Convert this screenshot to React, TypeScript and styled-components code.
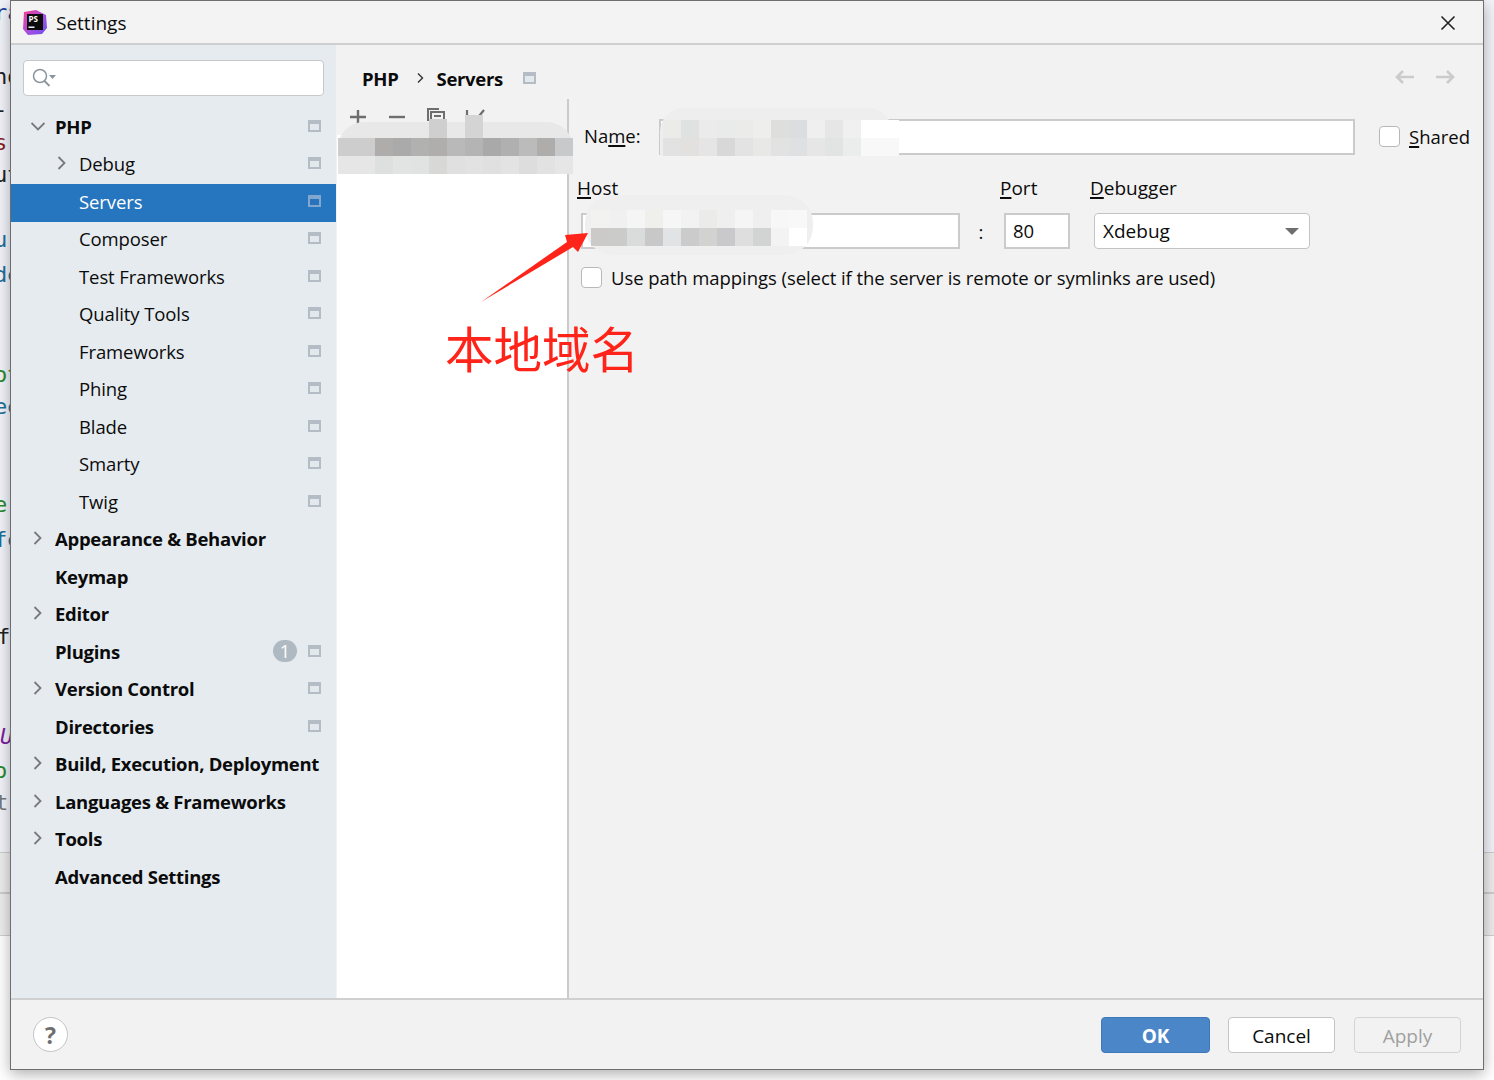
import React from "react";
import styled, { createGlobalStyle } from "styled-components";

const Global = createGlobalStyle`
  html, body { margin: 0; padding: 0; background: #fff; overflow: hidden; }
  #root { width: 1494px; height: 1080px; }
  * { box-sizing: border-box; }
`;
const Page = styled.div`
  position: relative; width: 1494px; height: 1080px; overflow: hidden;
  font-family: "Open Sans", "Noto Sans", "Noto Sans CJK SC", sans-serif;
  font-size: 18.5px; color: #0b0b0b;
`;
const Backdrop = styled.div`display: flex; flex-direction: column; height: 100%;`;
const EditorArea = styled.div`
  position: relative; height: 852px; background: #f2f4fa;
  font-family: "DejaVu Sans Mono", monospace; font-size: 22px;
`;
const Band = styled.div<{ $h: number }>`
  height: ${(p) => p.$h}px; background: #ededed; border-top: ${(p) => (p.$h === 40 ? 1 : 2)}px solid #cdcdcd;
`;
const Rest = styled.div`flex: 1; background: #fff; border-top: 1px solid #cfcfcf;`;
const Frag = styled.span<{ $y: number; $x: number; $c: string; $i?: boolean }>`
  position: absolute; left: ${(p) => p.$x}px; top: ${(p) => p.$y - 14}px; line-height: 28px;
  color: ${(p) => p.$c}; font-style: ${(p) => (p.$i ? "italic" : "normal")};
`;
const Dialog = styled.div`
  position: absolute; left: 10px; top: 0; width: 1474px; height: 1070px;
  display: flex; flex-direction: column; background: #f2f2f2;
  border: 1px solid #6e6e6e; box-shadow: 0 4px 14px rgba(0,0,0,.32);
`;
const TitleBar = styled.div`
  height: 44px; flex: none; display: flex; align-items: center; padding: 0 27px 0 11px; gap: 9px;
  border-bottom: 2px solid #cfcfcf; background: #f3f3f3;
`;
const Title = styled.span`flex: 1; font-size: 19px; padding-top: 2px;`;
const CloseIcon = styled.svg`margin-top: 2px;`;
const Content = styled.div`flex: 1; display: flex; min-height: 0;`;
const Sidebar = styled.nav`width: 325px; flex: none; background: #e6ebf0; display: flex; flex-direction: column; padding-top: 15px;`;
const SearchBox = styled.div`
  height: 36px; margin: 0 12px 13px; background: #fff; border: 1.5px solid #c6c9cc; border-radius: 4px;
  display: flex; align-items: center; padding-left: 7px;
`;
const TreeRow = styled.div<{ $sel?: boolean; $level: number }>`
  height: 37.5px; flex: none; display: flex; align-items: center;
  padding: 0 15px 3px ${(p) => (p.$level === 0 ? 20 : 44)}px;
  background: ${(p) => (p.$sel ? "#2675bf" : "transparent")};
  color: ${(p) => (p.$sel ? "#fff" : "#0b0b0b")};
`;
const ChevronSlot = styled.span`width: 24px; height: 16px; flex: none; display: flex; align-items: center; margin-bottom: 1px;`;
const RowLabel = styled.span<{ $bold: boolean }>`
  flex: 1; font-weight: ${(p) => (p.$bold ? 700 : 400)}; white-space: nowrap;
  letter-spacing: ${(p) => (p.$bold ? "-0.28px" : "-0.1px")};
`;
const IconLift = styled.span`display: flex; margin-bottom: 1px;`;
const Badge = styled.span`
  width: 24px; height: 22px; border-radius: 11px; background: #afb9c1; color: #fff; font-size: 18px;
  display: flex; align-items: center; justify-content: center; margin-right: 11px;
`;
const Main = styled.main`flex: 1; display: flex; flex-direction: column; min-width: 0;`;
const Crumbs = styled.div`
  height: 54px; flex: none; display: flex; align-items: center; padding: 12px 28px 0 26px;
  font-weight: 700; letter-spacing: -0.3px;
`;
const CrumbSep = styled.span`margin: 0 12px 0 16px; display: flex;`;
const CrumbIcon = styled.span`margin-left: 20px; display: flex; flex: 1;`;
const NavArrows = styled.div`display: flex; gap: 20px; margin-bottom: 2px;`;
const Split = styled.div`flex: 1; display: flex; min-height: 0;`;
const ListCol = styled.div`width: 233px; flex: none; display: flex; flex-direction: column; border-right: 2px solid #cbcbcb;`;
const ListTools = styled.div`height: 36px; flex: none; display: flex; align-items: flex-start; gap: 19px; padding: 8px 0 0 12px; overflow: hidden;`;
const ListBody = styled.div`flex: 1; background: #fff; margin-left: 1px;`;
const Form = styled.div`flex: 1; padding: 20px 14px 0 8px; display: flex; flex-direction: column;`;
const NameRow = styled.div`display: flex; align-items: center; height: 35px; padding-left: 7px;`;
const NameLabel = styled.label`width: 75px; flex: none; padding-bottom: 2px;`;
const Field = styled.div<{ $w?: number }>`
  height: 36px; background: #fff; border: 2px solid #cbcbcb;
  ${(p) => (p.$w ? `width: ${p.$w}px; flex: none;` : "flex: 1;")}
  display: flex; align-items: center; padding: 0 0 2px 7px;
`;
const Check = styled.span`
  width: 21px; height: 21px; flex: none; background: #fff; border: 1.5px solid #b8b8b8; border-radius: 4px;
`;
const SharedWrap = styled.div`display: flex; align-items: center; gap: 9px; margin-left: 24px; width: 90px; white-space: nowrap; flex: none;`;
const HeadRow = styled.div`display: flex; height: 24px; margin-top: 22px; line-height: 24px; font-size: 19px;`;
const HeadCell = styled.span<{ $w: number }>`width: ${(p) => p.$w}px; flex: none;`;
const HostRow = styled.div`display: flex; align-items: center; margin-top: 13px; padding-left: 4px;`;
const Colon = styled.span`width: 44px; flex: none; text-align: center; padding-right: 2px;`;
const Select = styled.div`
  width: 216px; height: 36px; margin-left: 24px; flex: none; background: #fff; border: 1.5px solid #c4c4c4; border-radius: 4px;
  display: flex; align-items: center; justify-content: space-between; padding: 0 10px 0 8px; font-size: 19px;
`;
const Caret = styled.span`width: 0; height: 0; border-left: 7px solid transparent; border-right: 7px solid transparent; border-top: 7px solid #6e6e6e;`;
const PathRow = styled.div`display: flex; align-items: center; gap: 9px; margin-top: 16px; padding-left: 4px; white-space: nowrap; letter-spacing: -0.06px;`;
const Footer = styled.footer`
  height: 71px; flex: none; border-top: 2px solid #d0d0d0; background: #f2f2f2;
  display: flex; align-items: center; padding: 0 22px 0 22px;
`;
const Help = styled.span`
  width: 35px; height: 35px; border-radius: 50%; background: #fff; border: 1.5px solid #c4c4c4; color: #6e6e6e;
  font-weight: 700; font-size: 23px; display: flex; align-items: center; justify-content: center; margin-right: auto;
`;
const Btn = styled.button<{ $kind: "ok" | "normal" | "off" }>`
  width: ${(p) => (p.$kind === "ok" ? 109 : 107)}px; height: 36px;
  margin-left: ${(p) => (p.$kind === "off" ? 19 : 18)}px;
  border-radius: 4px; font: inherit; font-size: 19px; padding: 2px 0 0;
  font-weight: ${(p) => (p.$kind === "ok" ? 700 : 400)};
  background: ${(p) => (p.$kind === "ok" ? "#4b87c8" : p.$kind === "normal" ? "#fff" : "#f2f2f2")};
  color: ${(p) => (p.$kind === "ok" ? "#fff" : p.$kind === "normal" ? "#0b0b0b" : "#a0a0a0")};
  border: 1.5px solid ${(p) => (p.$kind === "ok" ? "#3f78b8" : p.$kind === "normal" ? "#c4c4c4" : "#d4d4d4")};
`;
/* annotations painted over the screenshot */
const Blob = styled.div<{ $x: number; $y: number; $w: number; $h: number; $r: string; $c: string }>`
  position: absolute; left: ${(p) => p.$x}px; top: ${(p) => p.$y}px; width: ${(p) => p.$w}px; height: ${(p) => p.$h}px;
  border-radius: ${(p) => p.$r}; background: ${(p) => p.$c};
`;
const Mosaic = styled.div<{ $x: number; $y: number; $cols: string }>`
  position: absolute; left: ${(p) => p.$x}px; top: ${(p) => p.$y}px; display: grid;
  grid-template-columns: ${(p) => p.$cols}; grid-auto-rows: 18px;
`;
const Cell = styled.i<{ $c: string }>`display: block; background: ${(p) => p.$c};`;
const ArrowLayer = styled.svg`position: absolute; left: 470px; top: 225px;`;
const Note = styled.div`
  position: absolute; left: 445px; top: 314px; color: #ff2419; font-size: 48.5px; line-height: 66px;
  font-family: "Noto Sans CJK SC", sans-serif; font-weight: 400; white-space: nowrap;
`;

const ScopeIcon = ({ sel }: { sel?: boolean }) => (
  <svg width="13" height="12" viewBox="0 0 13 12">
    <rect width="13" height="12" fill={sel ? "#7fa7d0" : "#b4bdc5"} />
    <rect x="2" y="4" width="9" height="6" fill={sel ? "#2a73ba" : "#e3e8ec"} />
  </svg>
);
const Chevron = ({ open }: { open?: boolean }) => (
  <svg width="14" height="14" viewBox="0 0 14 14" fill="none" stroke="#77797b" strokeWidth="1.800">
    {open ? <path d="M.5 4 7 10.500 13.500 4" /> : <path d="M3.500 1 9.500 7 3.500 13" />}
  </svg>
);
const U = styled.u`text-underline-offset: 2px; text-decoration-thickness: 1.5px;`;

type Row = { label: string; level: 0 | 1; chev?: "open" | "closed"; scope?: boolean; sel?: boolean; badge?: string };
const rows: Row[] = [
  { label: "PHP", level: 0, chev: "open", scope: true },
  { label: "Debug", level: 1, chev: "closed", scope: true },
  { label: "Servers", level: 1, scope: true, sel: true },
  { label: "Composer", level: 1, scope: true },
  { label: "Test Frameworks", level: 1, scope: true },
  { label: "Quality Tools", level: 1, scope: true },
  { label: "Frameworks", level: 1, scope: true },
  { label: "Phing", level: 1, scope: true },
  { label: "Blade", level: 1, scope: true },
  { label: "Smarty", level: 1, scope: true },
  { label: "Twig", level: 1, scope: true },
  { label: "Appearance & Behavior", level: 0, chev: "closed" },
  { label: "Keymap", level: 0 },
  { label: "Editor", level: 0, chev: "closed" },
  { label: "Plugins", level: 0, scope: true, badge: "1" },
  { label: "Version Control", level: 0, chev: "closed", scope: true },
  { label: "Directories", level: 0, scope: true },
  { label: "Build, Execution, Deployment", level: 0, chev: "closed" },
  { label: "Languages & Frameworks", level: 0, chev: "closed" },
  { label: "Tools", level: 0, chev: "closed" },
  { label: "Advanced Settings", level: 0 },
];
const frags: [number, number, string, string, boolean?][] = [
  [13, -6, "ra", "#1d3f9a"], [77, -6, "nd", "#222"], [110, -6, "-:", "#222"], [143, -6, "s'", "#8a1f1f"], [175, -6, "ut", "#222"],
  [240, -6, "u'", "#1f6f9a"], [275, -6, "de", "#1f6f9a"], [375, -6, "ot", "#2a8a2a"], [407, -6, "ee", "#1f6f9a"],
  [505, -6, "e-", "#2a8a2a"], [540, -6, "fe", "#1f6f9a"], [637, -3, "f:", "#222"], [737, 0, "U", "#7a1fa0", true],
  [771, -6, "or", "#2a8a2a"], [803, -5, "t:", "#777"],
];
const listCells = ["#cdcdcd","#aeadab","#a9aaa9","#b1b1b0","#afaeac","#b9b9b9","#b4b4b4","#a9a9a9","#b0b0b0","#bbbbbb","#aeadab","#c8c9cb",
  "#e6e6e6","#dedfdf","#e2e3e3","#e1e2e2","#d8d8d7","#e0e0e0","#e2e2e2","#e0e0e0","#e3e3e3","#dddddd","#e2e2e2","#e6e6e6"];
const nameCells = ["#ebebe9","#e0e2e1","#ebebeb","#e8ebea","#ebebe9","#eeeeec","#dededc","#dcdddf","#efefef","#e6e6e6","#eff0ef","#ffffff","#ffffff",
  "#e2e2e2","#e2e1df","#e5e5e5","#d8d8d8","#e3e3e3","#e8e8e6","#e2e2e2","#dfe0e2","#e6e6e6","#e2e3e3","#ebecec","#f8f8f8","#f8f8f8"];
const hostCells = ["#f2f2f0","#f0f0f0","#f5f5f5","#efefeb","#f6f6f6","#f2f2f2","#ebebe9","#efefef","#f5f5f5","#efefef","#f7f7f7","#f8f8f8",
  "#cbcac8","#cbcbca","#dadcdb","#c8c8c8","#e2e3e5","#cbcbcb","#d2d2d0","#c9c9cb","#dedede","#d2d4d3","#f3f3f3","#ffffff"];

export default function App() {
  return (
    <Page>
      <Global />
      <Backdrop>
        <EditorArea>
          {frags.map(([y, x, t, c, i]) => (
            <Frag key={y} $y={y} $x={x} $c={c} $i={i}>{t}</Frag>
          ))}
        </EditorArea>
        <Band $h={40} />
        <Band $h={43} />
        <Rest />
      </Backdrop>
      <Dialog>
        <TitleBar>
          <svg width="25" height="25" viewBox="0 0 25 25">
            <defs>
              <linearGradient id="ps" x1="0" y1="0" x2="1" y2="1">
                <stop offset="0" stopColor="#ff3d8f" />
                <stop offset=".55" stopColor="#a54ee0" />
                <stop offset="1" stopColor="#6a4ff0" />
              </linearGradient>
            </defs>
            <path d="M2 2 14 0l10 5 1 13-5 6-14 1-5-6z" fill="url(#ps)" />
            <rect x="5" y="4" width="16" height="16" fill="#0c0c0c" />
            <text x="6.500" y="12" fill="#fff" fontSize="8" fontWeight="700" fontFamily="Open Sans">PS</text>
            <rect x="6.500" y="16.500" width="6" height="1.400" fill="#fff" />
          </svg>
          <Title>Settings</Title>
          <CloseIcon width="16" height="16" viewBox="0 0 16 16" stroke="#222" strokeWidth="1.600">
            <path d="M1.500 1.500l13 13M14.500 1.500l-13 13" />
          </CloseIcon>
        </TitleBar>
        <Content>
          <Sidebar>
            <SearchBox>
              <svg width="26" height="22" viewBox="0 0 26 22" fill="none">
                <circle cx="9" cy="9" r="6.500" stroke="#8c959c" strokeWidth="1.500" />
                <path d="M13.500 14l5 5" stroke="#8c959c" strokeWidth="1.800" />
                <path d="M18 8h7l-3.500 4z" fill="#8c959c" />
              </svg>
            </SearchBox>
            {rows.map((r) => (
              <TreeRow key={r.label} $sel={r.sel} $level={r.level}>
                <ChevronSlot>{r.chev && <Chevron open={r.chev === "open"} />}</ChevronSlot>
                <RowLabel $bold={r.level === 0}>{r.label}</RowLabel>
                {r.badge && <Badge>{r.badge}</Badge>}
                {r.scope && <IconLift><ScopeIcon sel={r.sel} /></IconLift>}
              </TreeRow>
            ))}
          </Sidebar>
          <Main>
            <Crumbs>
              PHP
              <CrumbSep>
                <svg width="10" height="12" viewBox="0 0 10 12" fill="none" stroke="#333" strokeWidth="1.400">
                  <path d="M3 1.500 7.500 6 3 10.500" />
                </svg>
              </CrumbSep>
              Servers
              <CrumbIcon><ScopeIcon /></CrumbIcon>
              <NavArrows>
                {["M19 8H2M8 2 2 8l6 6", "M1 8h17M12 2l6 6-6 6"].map((d) => (
                  <svg key={d} width="20" height="16" viewBox="0 0 20 16" fill="none" stroke="#cbcbcb" strokeWidth="2.600">
                    <path d={d} />
                  </svg>
                ))}
              </NavArrows>
            </Crumbs>
            <Split>
              <ListCol>
                <ListTools>
                  <svg width="20" height="20" viewBox="0 0 20 20" stroke="#6e6e6e" strokeWidth="2.400"><path d="M10 3v14M2 10h16" /></svg>
                  <svg width="20" height="20" viewBox="0 0 20 20" stroke="#6e6e6e" strokeWidth="2.400"><path d="M2 10h16" /></svg>
                  <svg width="20" height="20" viewBox="0 0 20 20" fill="none" stroke="#6e6e6e" strokeWidth="2"><path d="M2 14V2h11M5 5h13v14H5zM8 9h7M8 13h7" /></svg>
                  <svg width="20" height="20" viewBox="0 0 20 20" fill="none" stroke="#6e6e6e" strokeWidth="2.200"><path d="M2 3v12M6 10l4 4 9-11" /></svg>
                </ListTools>
                <ListBody />
              </ListCol>
              <Form>
                <NameRow>
                  <NameLabel>Na<U>m</U>e:</NameLabel>
                  <Field />
                  <SharedWrap><Check /><span><U>S</U>hared</span></SharedWrap>
                </NameRow>
                <HeadRow>
                  <HeadCell $w={423}><U>H</U>ost</HeadCell>
                  <HeadCell $w={90}><U>P</U>ort</HeadCell>
                  <HeadCell $w={120}><U>D</U>ebugger</HeadCell>
                </HeadRow>
                <HostRow>
                  <Field $w={379} />
                  <Colon>:</Colon>
                  <Field $w={66}>80</Field>
                  <Select>Xdebug<Caret /></Select>
                </HostRow>
                <PathRow>
                  <Check />
                  Use path mappings (select if the server is remote or symlinks are used)
                </PathRow>
              </Form>
            </Split>
          </Main>
        </Content>
        <Footer>
          <Help>?</Help>
          <Btn $kind="ok">OK</Btn>
          <Btn $kind="normal">Cancel</Btn>
          <Btn $kind="off">Apply</Btn>
        </Footer>
      </Dialog>

      <Blob $x={338} $y={122} $w={235} $h={52} $r="26px 26px 24px 0" $c="#e8e8e8" />
      <Blob $x={429} $y={119} $w={18} $h={19} $r="0" $c="#cfcfcf" />
      <Blob $x={465} $y={115} $w={18} $h={23} $r="0" $c="#d4d4d4" />
      <Mosaic $x={338} $y={138} $cols="37px repeat(11, 18px)">
        {listCells.map((c, i) => <Cell key={i} $c={c} />)}
      </Mosaic>
      <Blob $x={660} $y={108} $w={232} $h={48} $r="24px 24px 0 0" $c="#eeeeee" />
      <Mosaic $x={663} $y={120} $cols="repeat(11, 18px) 21px 17px">
        {nameCells.map((c, i) => <Cell key={i} $c={c} />)}
      </Mosaic>
      <Blob $x={585} $y={195} $w={228} $h={60} $r="28px" $c="#efefef" />
      <Mosaic $x={591} $y={210} $cols="repeat(12, 18px)">
        {hostCells.map((c, i) => <Cell key={i} $c={c} />)}
      </Mosaic>
      <ArrowLayer width="125" height="85" viewBox="0 0 125 85">
        <path d="M11 77 97 17 95 10 118 8 108 27 103 22 Z" fill="#ff2419" />
      </ArrowLayer>
      <Note>本地域名</Note>
    </Page>
  );
}
